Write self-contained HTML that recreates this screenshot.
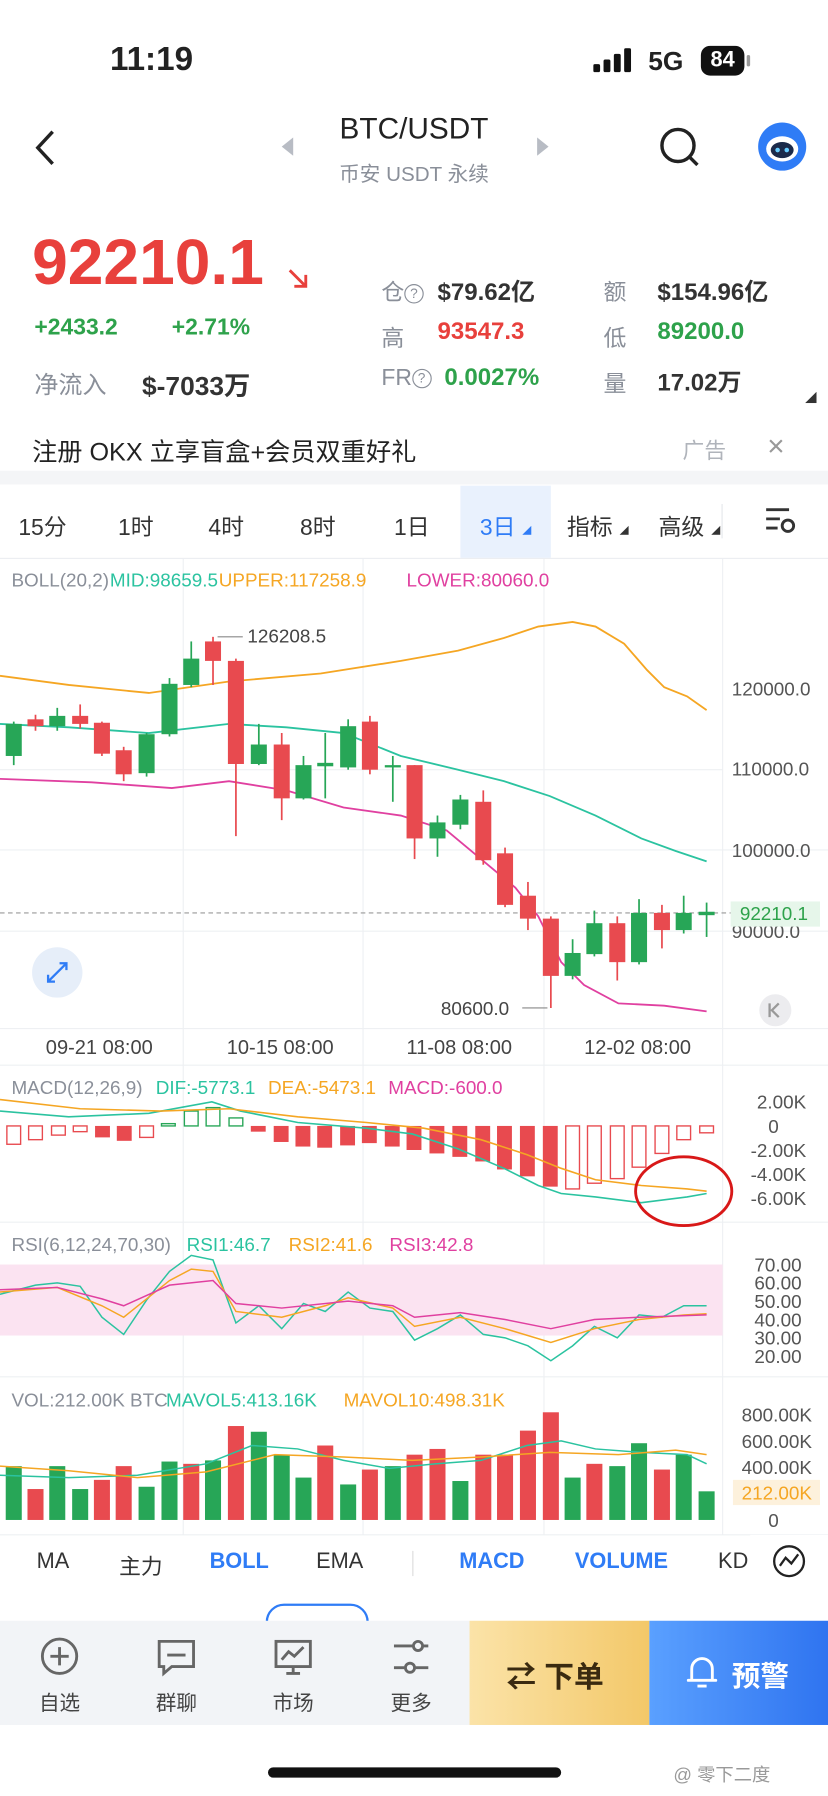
<!DOCTYPE html>
<html><head><meta charset="utf-8">
<style>
html,body{margin:0;padding:0;background:#fff;width:828px;height:1796px;overflow:hidden}
#w{position:absolute;left:0;top:0;width:723px;height:1568px;transform:scale(1.14523,1.14541);transform-origin:0 0;font-family:"Liberation Sans","Noto Sans CJK SC",sans-serif;color:#222}
.a{position:absolute;white-space:nowrap}
.g{color:#8a8f99}
.red{color:#e8403c}.grn{color:#2ea24b}
.b{font-weight:bold}
</style></head><body><div id="w">
<div class="a b" style="left:96px;top:36px;font-size:29px">11:19</div>
<svg class="a" style="left:518px;top:42px" width="36" height="22"><rect x="0" y="14" width="6" height="7" rx="1.5" fill="#111"/><rect x="9" y="10" width="6" height="11" rx="1.5" fill="#111"/><rect x="18" y="5" width="6" height="16" rx="1.5" fill="#111"/><rect x="27" y="0" width="6" height="21" rx="1.5" fill="#111"/></svg>
<div class="a b" style="left:566px;top:40px;font-size:23px">5G</div>
<div class="a b" style="left:612px;top:40px;width:38px;height:26px;background:#111;border-radius:8px;color:#fff;font-size:19px;text-align:center;line-height:26px">84</div>
<div class="a" style="left:652px;top:48px;width:3px;height:10px;background:#999;border-radius:2px"></div>
<svg class="a" style="left:28px;top:112px" width="24" height="34"><path d="M18 3 L5 17 L18 31" stroke="#222" stroke-width="3" fill="none"/></svg>
<svg class="a" style="left:244px;top:120px" width="14" height="16"><path d="M12 0 L2 8 L12 16Z" fill="#b8bcc4"/></svg>
<svg class="a" style="left:467px;top:120px" width="14" height="16"><path d="M2 0 L12 8 L2 16Z" fill="#b8bcc4"/></svg>
<div class="a" style="left:0;width:723px;text-align:center;top:97px;font-size:26px">BTC/USDT</div>
<div class="a g" style="left:0;width:723px;text-align:center;top:138px;font-size:18px">币安 USDT 永续</div>
<svg class="a" style="left:574px;top:110px" width="40" height="40"><circle cx="18" cy="17" r="14" stroke="#222" stroke-width="3" fill="none"/><path d="M28 27 L35 34" stroke="#222" stroke-width="3"/></svg>
<svg class="a" style="left:661px;top:106px" width="44" height="44"><circle cx="22" cy="22" r="21" fill="#2f7cf6"/><ellipse cx="22" cy="24" rx="14" ry="11" fill="#fff"/><ellipse cx="22" cy="25" rx="10" ry="7" fill="#1b2a4a"/><circle cx="18" cy="25" r="2" fill="#6cf"/><circle cx="26" cy="25" r="2" fill="#6cf"/></svg>
<div class="a b red" style="left:28px;top:196px;font-size:56px">92210.1</div>
<svg class="a" style="left:250px;top:233px" width="22" height="22"><path d="M3 3 L17 17 M7 17 H17 V7" stroke="#e8403c" stroke-width="2.5" fill="none"/></svg>
<div class="a b grn" style="left:30px;top:275px;font-size:20px">+2433.2</div>
<div class="a b grn" style="left:150px;top:275px;font-size:20px">+2.71%</div>
<div class="a g" style="left:30px;top:320px;font-size:21px">净流入</div>
<div class="a b" style="left:124px;top:318px;font-size:23px;color:#333">$-7033万</div>
<div class="a g" style="left:333px;top:239px;font-size:20px">仓<span style="display:inline-block;width:15px;height:15px;border:1.5px solid #8a8f99;border-radius:50%;font-size:12px;line-height:15px;text-align:center;vertical-align:2px">?</span></div>
<div class="a b" style="left:382px;top:239px;font-size:21px;color:#333">$79.62亿</div>
<div class="a g" style="left:527px;top:239px;font-size:20px">额</div>
<div class="a b" style="left:574px;top:239px;font-size:21px;color:#333">$154.96亿</div>
<div class="a g" style="left:333px;top:279px;font-size:20px">高</div>
<div class="a b red" style="left:382px;top:278px;font-size:21px">93547.3</div>
<div class="a g" style="left:527px;top:279px;font-size:20px">低</div>
<div class="a b grn" style="left:574px;top:278px;font-size:21px">89200.0</div>
<div class="a g" style="left:333px;top:319px;font-size:20px">FR<span style="display:inline-block;width:15px;height:15px;border:1.5px solid #8a8f99;border-radius:50%;font-size:12px;line-height:15px;text-align:center;vertical-align:2px">?</span></div>
<div class="a b grn" style="left:388px;top:318px;font-size:21px">0.0027%</div>
<div class="a g" style="left:527px;top:319px;font-size:20px">量</div>
<div class="a b" style="left:574px;top:318px;font-size:21px;color:#333">17.02万</div>
<svg class="a" style="left:703px;top:342px" width="10" height="10"><path d="M10 0 L10 10 L0 10Z" fill="#333"/></svg>
<div class="a" style="left:28px;top:377px;font-size:22px">注册 OKX 立享盲盒+会员双重好礼</div>
<div class="a" style="left:596px;top:379px;font-size:19px;color:#b0b4bb">广告</div>
<div class="a" style="left:670px;top:374px;font-size:26px;color:#999">×</div>
<div class="a" style="left:0;top:411px;width:723px;height:12px;background:#f4f5f7"></div>
<div class="a" style="left:402px;top:424px;width:79px;height:63px;background:#e9f1fd"></div>
<div class="a" style="left:16px;top:444px;font-size:20px;color:#333">15分</div>
<div class="a" style="left:103px;top:444px;font-size:20px;color:#333">1时</div>
<div class="a" style="left:182px;top:444px;font-size:20px;color:#333">4时</div>
<div class="a" style="left:262px;top:444px;font-size:20px;color:#333">8时</div>
<div class="a" style="left:344px;top:444px;font-size:20px;color:#333">1日</div>
<div class="a" style="left:419px;top:444px;font-size:20px;color:#2f7cf6">3日</div>
<svg class="a" style="left:456px;top:459px" width="8" height="8"><path d="M8 0V8H0Z" fill="#2f7cf6"/></svg>
<div class="a" style="left:495px;top:444px;font-size:20px;color:#333">指标</div>
<svg class="a" style="left:541px;top:459px" width="8" height="8"><path d="M8 0V8H0Z" fill="#333"/></svg>
<div class="a" style="left:575px;top:444px;font-size:20px;color:#333">高级</div>
<svg class="a" style="left:621px;top:459px" width="8" height="8"><path d="M8 0V8H0Z" fill="#333"/></svg>
<div class="a" style="left:630px;top:440px;width:1px;height:30px;background:#e5e7eb"></div>
<svg class="a" style="left:667px;top:442px" width="30" height="26"><path d="M2 3H22M2 11H14M2 19H12" stroke="#333" stroke-width="2.5"/><circle cx="21" cy="17" r="5" stroke="#333" stroke-width="2.5" fill="none"/></svg>
<div class="a" style="left:0;top:487px;width:723px;height:1px;background:#eceef1"></div>

<svg class="a" style="left:0;top:488px" width="723" height="855" font-family="Liberation Sans" font-size="16.5">
<g transform="translate(0,-488)">
<g stroke="#eef0f3" stroke-width="1">
<line x1="631" y1="488" x2="631" y2="1340"/>
<line x1="0" y1="672" x2="631" y2="672"/><line x1="0" y1="742" x2="723" y2="742"/><line x1="0" y1="813" x2="723" y2="813"/>
<line x1="0" y1="898" x2="723" y2="898"/><line x1="0" y1="930" x2="723" y2="930"/>
<line x1="0" y1="1067" x2="723" y2="1067"/><line x1="0" y1="1202" x2="723" y2="1202"/>
<line x1="0" y1="1340" x2="723" y2="1340"/>
<line x1="160" y1="488" x2="160" y2="1340"/><line x1="317" y1="488" x2="317" y2="1340"/><line x1="475" y1="488" x2="475" y2="1340"/>
</g>
<text x="10" y="512" fill="#8a8f99">BOLL(20,2)</text><text x="96" y="512" fill="#2bc3a0">MID:98659.5</text><text x="191" y="512" fill="#f5a623">UPPER:117258.9</text><text x="355" y="512" fill="#e040a0">LOWER:80060.0</text>
<g fill="#555"><text x="639" y="607">120000.0</text><text x="639" y="677">110000.0</text><text x="639" y="748">100000.0</text><text x="639" y="819">90000.0</text></g>
<line x1="0" y1="797" x2="640" y2="797" stroke="#999" stroke-dasharray="4,3"/>
<rect x="638" y="787" width="78" height="22" fill="#e6f6ea"/><text x="646" y="803" fill="#2ea24b">92210.1</text>
<polyline fill="none" stroke="#f5a623" stroke-width="1.6" points="0,590 60,598 130,605 200,595 280,588 350,577 400,568 440,557 470,547 500,543 520,547 545,562 565,585 580,600 600,608 617,620"/>
<polyline fill="none" stroke="#2bc3a0" stroke-width="1.6" points="0,632 60,635 130,640 200,632 250,635 300,640 350,660 400,672 440,682 480,695 520,712 560,732 590,743 617,752"/>
<polyline fill="none" stroke="#e040a0" stroke-width="1.6" points="0,680 80,683 150,688 200,682 250,690 300,705 350,712 390,725 420,750 450,775 470,800 490,840 510,860 540,876 580,878 617,883"/>
<g stroke-width="1.5">
<line x1="12" y1="630" x2="12" y2="668" stroke="#27a657"/><rect x="5" y="632" width="14" height="28" fill="#27a657"/>
<line x1="31" y1="624" x2="31" y2="638" stroke="#e84a4f"/><rect x="24" y="628" width="14" height="6" fill="#e84a4f"/>
<line x1="50" y1="618" x2="50" y2="638" stroke="#27a657"/><rect x="43" y="625" width="14" height="9" fill="#27a657"/>
<line x1="70" y1="615" x2="70" y2="636" stroke="#e84a4f"/><rect x="63" y="625" width="14" height="7" fill="#e84a4f"/>
<line x1="89" y1="630" x2="89" y2="660" stroke="#e84a4f"/><rect x="82" y="631" width="14" height="27" fill="#e84a4f"/>
<line x1="108" y1="652" x2="108" y2="682" stroke="#e84a4f"/><rect x="101" y="655" width="14" height="21" fill="#e84a4f"/>
<line x1="128" y1="640" x2="128" y2="678" stroke="#27a657"/><rect x="121" y="641" width="14" height="34" fill="#27a657"/>
<line x1="148" y1="592" x2="148" y2="643" stroke="#27a657"/><rect x="141" y="597" width="14" height="44" fill="#27a657"/>
<line x1="167" y1="560" x2="167" y2="600" stroke="#27a657"/><rect x="160" y="575" width="14" height="23" fill="#27a657"/>
<line x1="186" y1="556" x2="186" y2="598" stroke="#e84a4f"/><rect x="179" y="560" width="14" height="17" fill="#e84a4f"/>
<line x1="206" y1="575" x2="206" y2="730" stroke="#e84a4f"/><rect x="199" y="577" width="14" height="90" fill="#e84a4f"/>
<line x1="226" y1="632" x2="226" y2="668" stroke="#27a657"/><rect x="219" y="650" width="14" height="17" fill="#27a657"/>
<line x1="246" y1="640" x2="246" y2="716" stroke="#e84a4f"/><rect x="239" y="650" width="14" height="47" fill="#e84a4f"/>
<line x1="265" y1="660" x2="265" y2="698" stroke="#27a657"/><rect x="258" y="668" width="14" height="29" fill="#27a657"/>
<line x1="284" y1="640" x2="284" y2="697" stroke="#27a657"/><rect x="277" y="666" width="14" height="3" fill="#27a657"/>
<line x1="304" y1="628" x2="304" y2="672" stroke="#27a657"/><rect x="297" y="634" width="14" height="36" fill="#27a657"/>
<line x1="323" y1="625" x2="323" y2="676" stroke="#e84a4f"/><rect x="316" y="630" width="14" height="42" fill="#e84a4f"/>
<line x1="343" y1="660" x2="343" y2="700" stroke="#27a657"/><rect x="336" y="668" width="14" height="2" fill="#27a657"/>
<line x1="362" y1="668" x2="362" y2="750" stroke="#e84a4f"/><rect x="355" y="668" width="14" height="64" fill="#e84a4f"/>
<line x1="382" y1="712" x2="382" y2="748" stroke="#27a657"/><rect x="375" y="718" width="14" height="14" fill="#27a657"/>
<line x1="402" y1="694" x2="402" y2="724" stroke="#27a657"/><rect x="395" y="698" width="14" height="22" fill="#27a657"/>
<line x1="422" y1="690" x2="422" y2="755" stroke="#e84a4f"/><rect x="415" y="700" width="14" height="51" fill="#e84a4f"/>
<line x1="441" y1="740" x2="441" y2="792" stroke="#e84a4f"/><rect x="434" y="745" width="14" height="45" fill="#e84a4f"/>
<line x1="461" y1="770" x2="461" y2="812" stroke="#e84a4f"/><rect x="454" y="782" width="14" height="20" fill="#e84a4f"/>
<line x1="481" y1="800" x2="481" y2="880" stroke="#e84a4f"/><rect x="474" y="802" width="14" height="50" fill="#e84a4f"/>
<line x1="500" y1="820" x2="500" y2="855" stroke="#27a657"/><rect x="493" y="832" width="14" height="20" fill="#27a657"/>
<line x1="519" y1="795" x2="519" y2="835" stroke="#27a657"/><rect x="512" y="806" width="14" height="27" fill="#27a657"/>
<line x1="539" y1="800" x2="539" y2="856" stroke="#e84a4f"/><rect x="532" y="806" width="14" height="34" fill="#e84a4f"/>
<line x1="558" y1="785" x2="558" y2="842" stroke="#27a657"/><rect x="551" y="797" width="14" height="43" fill="#27a657"/>
<line x1="578" y1="790" x2="578" y2="828" stroke="#e84a4f"/><rect x="571" y="797" width="14" height="15" fill="#e84a4f"/>
<line x1="597" y1="782" x2="597" y2="815" stroke="#27a657"/><rect x="590" y="797" width="14" height="15" fill="#27a657"/>
<line x1="617" y1="788" x2="617" y2="818" stroke="#27a657"/><rect x="610" y="796" width="14" height="3" fill="#27a657"/>
</g>
<line x1="190" y1="556" x2="212" y2="556" stroke="#888"/><text x="216" y="561" fill="#444">126208.5</text>
<line x1="456" y1="880" x2="478" y2="880" stroke="#888"/><text x="385" y="886" fill="#444">80600.0</text>
<circle cx="50" cy="849" r="22" fill="#e6eef9"/><path d="M42 857 L58 841 M52 841H58V847 M42 851V857H48" stroke="#2f7cf6" stroke-width="2" fill="none"/>
<circle cx="677" cy="882" r="14" fill="#ececef"/><path d="M680 876 L674 882 L680 888 M672 876V888" stroke="#999" stroke-width="2" fill="none"/>
<g fill="#444" font-size="17.5"><text x="40" y="920">09-21 08:00</text><text x="198" y="920">10-15 08:00</text><text x="355" y="920">11-08 08:00</text><text x="510" y="920">12-02 08:00</text></g>
<text x="10" y="955" fill="#8a8f99">MACD(12,26,9)</text><text x="136" y="955" fill="#2bc3a0">DIF:-5773.1</text><text x="234" y="955" fill="#f5a623">DEA:-5473.1</text><text x="339" y="955" fill="#e040a0">MACD:-600.0</text>
<g fill="#555" text-anchor="end"><text x="704" y="968">2.00K</text><text x="680" y="989">0</text><text x="704" y="1010">-2.00K</text><text x="704" y="1031">-4.00K</text><text x="704" y="1052">-6.00K</text></g>
<g stroke="#e84a4f" stroke-width="1.2" fill="none">
<rect x="6" y="983" width="12" height="16"/><rect x="25" y="983" width="12" height="12"/><rect x="45" y="983" width="12" height="8"/><rect x="64" y="983" width="12" height="5"/>
</g>
<g fill="#e84a4f">
<rect x="83" y="983" width="13" height="10"/><rect x="102" y="983" width="13" height="13"/><rect x="239" y="983" width="13" height="14"/><rect x="258" y="983" width="13" height="18"/><rect x="277" y="983" width="13" height="19"/><rect x="297" y="983" width="13" height="17"/><rect x="316" y="983" width="13" height="15"/><rect x="336" y="983" width="13" height="18"/><rect x="355" y="983" width="13" height="21"/><rect x="375" y="983" width="13" height="24"/><rect x="395" y="983" width="13" height="27"/><rect x="415" y="983" width="13" height="31"/><rect x="434" y="983" width="13" height="38"/><rect x="454" y="983" width="13" height="44"/><rect x="474" y="983" width="13" height="53"/><rect x="219" y="983" width="13" height="5"/>
</g>
<g stroke="#e84a4f" stroke-width="1.2" fill="none">
<rect x="122" y="983" width="12" height="10"/><rect x="494" y="983" width="12" height="55"/><rect x="513" y="983" width="12" height="50"/><rect x="533" y="983" width="12" height="46"/><rect x="552" y="983" width="12" height="36"/><rect x="572" y="983" width="12" height="24"/><rect x="591" y="983" width="12" height="12"/><rect x="611" y="983" width="12" height="6"/>
</g>
<g stroke="#27a657" stroke-width="1.2" fill="none"><rect x="141" y="981" width="12" height="2"/><rect x="161" y="970" width="12" height="13"/><rect x="180" y="967" width="12" height="16"/><rect x="200" y="976" width="12" height="7"/></g>
<polyline fill="none" stroke="#2bc3a0" stroke-width="1.4" points="0,970 60,975 130,972 185,962 210,970 260,980 320,985 360,990 400,1003 440,1020 470,1035 490,1042 520,1045 560,1050 600,1045 617,1042"/>
<polyline fill="none" stroke="#f5a623" stroke-width="1.4" points="0,960 70,968 140,970 200,968 260,975 320,980 370,985 420,995 460,1008 490,1020 520,1030 560,1035 600,1038 617,1040"/>
<ellipse cx="597" cy="1040" rx="42" ry="30" fill="none" stroke="#d81818" stroke-width="2.5"/>
<rect x="0" y="1104" width="631" height="62" fill="#fbe3f1"/>
<text x="10" y="1092" fill="#8a8f99">RSI(6,12,24,70,30)</text><text x="163" y="1092" fill="#2bc3a0">RSI1:46.7</text><text x="252" y="1092" fill="#f5a623">RSI2:41.6</text><text x="340" y="1092" fill="#e040a0">RSI3:42.8</text>
<g fill="#555" text-anchor="end"><text x="700" y="1110">70.00</text><text x="700" y="1126">60.00</text><text x="700" y="1142">50.00</text><text x="700" y="1158">40.00</text><text x="700" y="1174">30.00</text><text x="700" y="1190">20.00</text></g>
<polyline fill="none" stroke="#2bc3a0" stroke-width="1.3" points="0,1130 31,1122 50,1120 70,1123 89,1150 108,1165 128,1135 148,1110 167,1096 186,1100 206,1155 226,1140 246,1160 265,1138 284,1145 304,1128 323,1142 343,1145 362,1170 382,1160 402,1148 422,1165 441,1168 461,1175 481,1188 500,1175 519,1158 539,1168 558,1148 578,1150 597,1140 617,1140"/>
<polyline fill="none" stroke="#f5a623" stroke-width="1.3" points="0,1128 50,1124 89,1140 108,1150 148,1118 167,1108 186,1110 206,1145 246,1150 284,1140 304,1133 343,1142 362,1158 402,1150 441,1160 481,1172 519,1160 558,1152 597,1148 617,1147"/>
<polyline fill="none" stroke="#e040a0" stroke-width="1.3" points="0,1126 50,1124 89,1134 108,1140 148,1122 186,1118 206,1138 246,1142 304,1136 343,1140 362,1150 402,1146 441,1152 481,1160 519,1152 558,1150 617,1148"/>
<text x="10" y="1228" fill="#8a8f99">VOL:212.00K BTC</text><text x="145" y="1228" fill="#2bc3a0">MAVOL5:413.16K</text><text x="300" y="1228" fill="#f5a623">MAVOL10:498.31K</text>
<g fill="#555" text-anchor="end"><text x="709" y="1241">800.00K</text><text x="709" y="1264">600.00K</text><text x="709" y="1287">400.00K</text><text x="680" y="1333">0</text></g>
<rect x="640" y="1292" width="76" height="22" fill="#fdf1dc"/><text x="709" y="1309" fill="#f5a623" text-anchor="end">212.00K</text>
<g>
<rect x="5" y="1280" width="14" height="47" fill="#27a657"/><rect x="24" y="1300" width="14" height="27" fill="#e84a4f"/><rect x="43" y="1280" width="14" height="47" fill="#27a657"/><rect x="63" y="1300" width="14" height="27" fill="#27a657"/><rect x="82" y="1292" width="14" height="35" fill="#e84a4f"/><rect x="101" y="1280" width="14" height="47" fill="#e84a4f"/><rect x="121" y="1298" width="14" height="29" fill="#27a657"/><rect x="141" y="1276" width="14" height="51" fill="#27a657"/><rect x="160" y="1278" width="14" height="49" fill="#e84a4f"/><rect x="179" y="1275" width="14" height="52" fill="#27a657"/><rect x="199" y="1245" width="14" height="82" fill="#e84a4f"/><rect x="219" y="1250" width="14" height="77" fill="#27a657"/><rect x="239" y="1270" width="14" height="57" fill="#27a657"/><rect x="258" y="1290" width="14" height="37" fill="#27a657"/><rect x="277" y="1262" width="14" height="65" fill="#e84a4f"/><rect x="297" y="1296" width="14" height="31" fill="#27a657"/><rect x="316" y="1283" width="14" height="44" fill="#e84a4f"/><rect x="336" y="1280" width="14" height="47" fill="#27a657"/><rect x="355" y="1270" width="14" height="57" fill="#e84a4f"/><rect x="375" y="1265" width="14" height="62" fill="#e84a4f"/><rect x="395" y="1293" width="14" height="34" fill="#27a657"/><rect x="415" y="1270" width="14" height="57" fill="#e84a4f"/><rect x="434" y="1270" width="14" height="57" fill="#e84a4f"/><rect x="454" y="1249" width="14" height="78" fill="#e84a4f"/><rect x="474" y="1233" width="14" height="94" fill="#e84a4f"/><rect x="493" y="1290" width="14" height="37" fill="#27a657"/><rect x="512" y="1278" width="14" height="49" fill="#e84a4f"/><rect x="532" y="1280" width="14" height="47" fill="#27a657"/><rect x="551" y="1260" width="14" height="67" fill="#27a657"/><rect x="571" y="1283" width="14" height="44" fill="#e84a4f"/><rect x="590" y="1270" width="14" height="57" fill="#27a657"/><rect x="610" y="1302" width="14" height="25" fill="#27a657"/>
</g>
<polyline fill="none" stroke="#2bc3a0" stroke-width="1.3" points="0,1288 60,1290 120,1288 180,1278 220,1262 260,1265 300,1275 340,1282 380,1278 420,1275 460,1262 490,1258 520,1265 560,1268 600,1270 617,1278"/>
<polyline fill="none" stroke="#f5a623" stroke-width="1.3" points="0,1280 60,1284 120,1290 180,1285 240,1270 300,1272 360,1275 420,1272 480,1268 540,1270 590,1266 617,1270"/>
</g></svg>

<div class="a" style="left:32px;top:1353px;font-size:19px;color:#333">MA</div>
<div class="a" style="left:104px;top:1353px;font-size:19px;color:#333">主力</div>
<div class="a b" style="left:183px;top:1353px;font-size:19px;color:#2f7cf6">BOLL</div>
<div class="a" style="left:276px;top:1353px;font-size:19px;color:#333">EMA</div>
<div class="a" style="left:360px;top:1354px;width:1px;height:22px;background:#ddd"></div>
<div class="a b" style="left:401px;top:1353px;font-size:19px;color:#2f7cf6">MACD</div>
<div class="a b" style="left:502px;top:1353px;font-size:19px;color:#2f7cf6">VOLUME</div>
<div class="a" style="left:627px;top:1353px;font-size:19px;color:#333">KD</div>
<div class="a" style="left:655px;top:1340px;width:68px;height:50px;background:#fff"></div>
<svg class="a" style="left:674px;top:1348px" width="30" height="30"><circle cx="15" cy="15" r="13" stroke="#222" stroke-width="2" fill="none"/><path d="M7 19 L12 12 L17 17 L23 9" stroke="#222" stroke-width="2" fill="none"/></svg>
<div class="a" style="left:232px;top:1400px;width:86px;height:30px;border:2px solid #2f7cf6;border-radius:16px"></div>
<div class="a" style="left:0;top:1415px;width:410px;height:91px;background:#f2f4f7"></div>
<svg class="a" style="left:34px;top:1428px" width="36" height="36"><circle cx="18" cy="18" r="15" stroke="#666" stroke-width="2.5" fill="none"/><path d="M18 10V26M10 18H26" stroke="#666" stroke-width="2.5"/></svg>
<svg class="a" style="left:136px;top:1430px" width="36" height="34"><path d="M3 3H33V25H14L7 31V25H3Z" stroke="#666" stroke-width="2.5" fill="none"/><path d="M10 15H26" stroke="#666" stroke-width="2.5"/></svg>
<svg class="a" style="left:238px;top:1430px" width="36" height="34"><rect x="3" y="3" width="30" height="22" stroke="#666" stroke-width="2.5" fill="none"/><path d="M8 19L14 12L19 16L27 8M12 31H24M18 25V31" stroke="#666" stroke-width="2.5" fill="none"/></svg>
<svg class="a" style="left:341px;top:1430px" width="36" height="34"><path d="M3 7H20M3 26H12M22 26H33M28 7H33" stroke="#666" stroke-width="2.5"/><circle cx="24" cy="7" r="4" stroke="#666" stroke-width="2.5" fill="none"/><circle cx="17" cy="26" r="4" stroke="#666" stroke-width="2.5" fill="none"/></svg>
<div class="a" style="left:34px;top:1473px;font-size:18px;color:#444">自选</div>
<div class="a" style="left:136px;top:1473px;font-size:18px;color:#444">群聊</div>
<div class="a" style="left:238px;top:1473px;font-size:18px;color:#444">市场</div>
<div class="a" style="left:341px;top:1473px;font-size:18px;color:#444">更多</div>
<div class="a" style="left:410px;top:1415px;width:157px;height:91px;background:linear-gradient(90deg,#fbe3a8,#f3c869)"></div>
<div class="a b" style="left:442px;top:1444px;font-size:26px;color:#3a2a10">⇄ 下单</div>
<div class="a" style="left:567px;top:1415px;width:156px;height:91px;background:linear-gradient(90deg,#5aa0ff,#2f74f0)"></div>
<svg class="a" style="left:598px;top:1444px" width="30" height="32"><path d="M6 23V13a9 9 0 0 1 18 0V23H27H3Z" stroke="#fff" stroke-width="2.5" fill="none" stroke-linejoin="round"/><path d="M11 28H19" stroke="#fff" stroke-width="2.5"/></svg>
<div class="a b" style="left:639px;top:1444px;font-size:25px;color:#fff">预警</div>
<div class="a" style="left:0;top:1506px;width:723px;height:62px;background:#fff"></div>
<div class="a" style="left:234px;top:1543px;width:256px;height:9px;background:#111;border-radius:5px"></div>
<div class="a" style="left:588px;top:1536px;font-size:16px;color:#999">@ 零下二度</div>
</div></body></html>
